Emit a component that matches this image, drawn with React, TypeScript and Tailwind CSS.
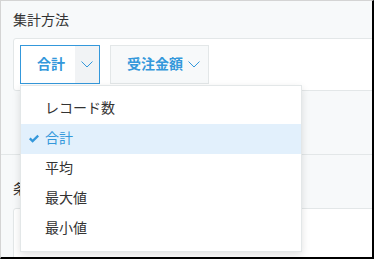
import React from 'react';

const items = ['レコード数', '合計', '平均', '最大値', '最小値'];

function Chevron() {
  return (
    <svg width="12" height="7" viewBox="0 0 12 7" fill="none" className="block">
      <polyline points="0.5,0.5 6,6 11.5,0.5" stroke="#3498db" strokeWidth="1" />
    </svg>
  );
}

function Check() {
  return (
    <svg width="12" height="10" viewBox="0 0 12 10" className="block">
      <path d="M1 5.2 L2.6 3.6 L4.6 5.6 L9.4 0.8 L11 2.4 L4.6 8.8 Z" fill="#3498db" />
    </svg>
  );
}

export default function App() {
  const selected = '合計';

  return (
    <div
      className="w-[374px] h-[259px] overflow-hidden bg-[#f7f9fa] border-t border-l border-t-[#d4d4d4] border-l-[#d4d4d4] border-r-2 border-b-2 border-r-black border-b-black text-[14px] text-[#333]"
      style={{ fontFamily: '"Noto Sans CJK JP", "Noto Sans", sans-serif' }}
    >
      {/* 集計方法 */}
      <div className="pl-[12px] pt-[8px] pb-[63px] border-b border-[#e3e7e8]">
        <div className="leading-[20px] pb-[1px]">集計方法</div>
        <div className="mt-[8px] w-[400px] bg-white border border-[#e3e7e8] rounded-[3px] p-[6px] flex">
          <div className="relative">
            <div className="h-[39px] flex border border-[#3498db] bg-white">
              <div className="pl-[16px] pr-[10px] pb-[2px] flex items-center font-bold text-[#3498db]">合計</div>
              <div className="w-[24px] bg-[#f1f3f5] flex items-center justify-center">
                <Chevron />
              </div>
            </div>

            {/* dropdown menu */}
            <div className="absolute left-0 top-[40px] z-10 w-[282px] bg-white border border-[#e3e7e8] pt-[8px] pb-[7px] shadow-[0_3px_8px_rgba(0,0,0,0.12)]">
              {items.map((item) => {
                const active = item === selected;
                return (
                  <div
                    key={item}
                    className={`relative h-[30px] pl-[24px] pb-[3px] flex items-center ${
                      active ? 'bg-[#e2f0fc] text-[#3498db]' : 'text-[#333]'
                    }`}
                  >
                    {active && (
                      <span className="absolute left-[7px] top-[10px]">
                        <Check />
                      </span>
                    )}
                    {item}
                  </div>
                );
              })}
            </div>
          </div>

          <div className="ml-[10px] h-[39px] flex items-center gap-[5px] pl-[16px] pr-[8px] border border-[#e3e7e8] bg-[#f7f9fa] font-bold text-[#3498db]">
            <span className="pb-[2px]">受注金額</span>
            <Chevron />
          </div>
        </div>
      </div>

      {/* 条件 */}
      <div className="pl-[12px] pt-[23px]">
        <div className="leading-[20px] pb-[1px]">条件</div>
        <div className="mt-[9px] w-[400px] h-[80px] bg-white border border-[#e3e7e8] rounded-[3px]" />
      </div>
    </div>
  );
}
